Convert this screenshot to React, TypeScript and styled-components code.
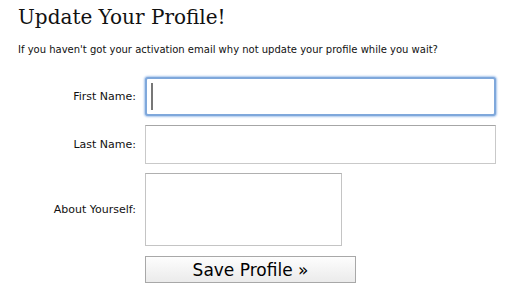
import React from "react";
import styled, { createGlobalStyle } from "styled-components";

const GlobalStyle = createGlobalStyle`
  html, body {
    margin: 0;
    padding: 0;
    background: #fff;
  }
`;

const Page = styled.div`
  padding: 4px 18px 0 18px;
  font-family: "DejaVu Sans", Verdana, sans-serif;
  color: #111;
`;

const Title = styled.h1`
  font-family: "DejaVu Serif", Georgia, serif;
  font-weight: normal;
  font-size: 20px;
  line-height: 26px;
  margin: 0;
  color: #111;
`;

const Intro = styled.p`
  font-size: 10px;
  margin: 13px 0 0 0;
  line-height: 14px;
`;

const Form = styled.form`
  display: grid;
  grid-template-columns: 118px auto;
  column-gap: 9px;
  row-gap: 9px;
  margin: 20px 0 0 0;
  align-items: center;
`;

const Label = styled.label`
  font-size: 11px;
  text-align: right;
`;

const FieldWrap = styled.div`
  position: relative;
  display: flex;
`;

const TextInput = styled.input<{ $focused?: boolean }>`
  box-sizing: border-box;
  width: 351px;
  height: 39px;
  font-size: 22px;
  padding: 0 6px;
  outline: none;
  background: #fff;
  ${(p) =>
    p.$focused
      ? `
    border: 2px solid #7fa8db;
    border-radius: 3px;
    box-shadow: 0 0 2px 1px #a9c6ec;
  `
      : `
    border: 1px solid #c9c9c9;
    border-top-color: #a6a6a6;
  `}
`;

const Caret = styled.span`
  position: absolute;
  left: 6px;
  top: 6px;
  width: 2px;
  height: 27px;
  background: #777;
`;

const TextArea = styled.textarea`
  box-sizing: border-box;
  width: 197px;
  height: 73px;
  border: 1px solid #c4c4c4;
  border-top-color: #b0b0b0;
  resize: none;
  outline: none;
`;

const SaveButton = styled.button`
  box-sizing: border-box;
  width: 211px;
  height: 27px;
  font-family: "DejaVu Sans", Verdana, sans-serif;
  font-size: 17px;
  color: #000;
  border: 1px solid #a8a8a8;
  background: linear-gradient(#fdfdfd, #ebebeb);
  padding: 0;
  margin-top: 1px;
`;

export default function App() {
  return (
    <>
      <GlobalStyle />
      <Page>
        <Title>Update Your Profile!</Title>
        <Intro>
          If you haven't got your activation email why not update your profile while you wait?
        </Intro>
        <Form onSubmit={(e) => e.preventDefault()}>
          <Label htmlFor="first">First Name:</Label>
          <FieldWrap>
            <TextInput id="first" $focused />
            <Caret />
          </FieldWrap>
          <Label htmlFor="last">Last Name:</Label>
          <FieldWrap>
            <TextInput id="last" />
          </FieldWrap>
          <Label htmlFor="about">About Yourself:</Label>
          <FieldWrap>
            <TextArea id="about" />
          </FieldWrap>
          <span />
          <FieldWrap>
            <SaveButton type="submit">Save Profile »</SaveButton>
          </FieldWrap>
        </Form>
      </Page>
    </>
  );
}
